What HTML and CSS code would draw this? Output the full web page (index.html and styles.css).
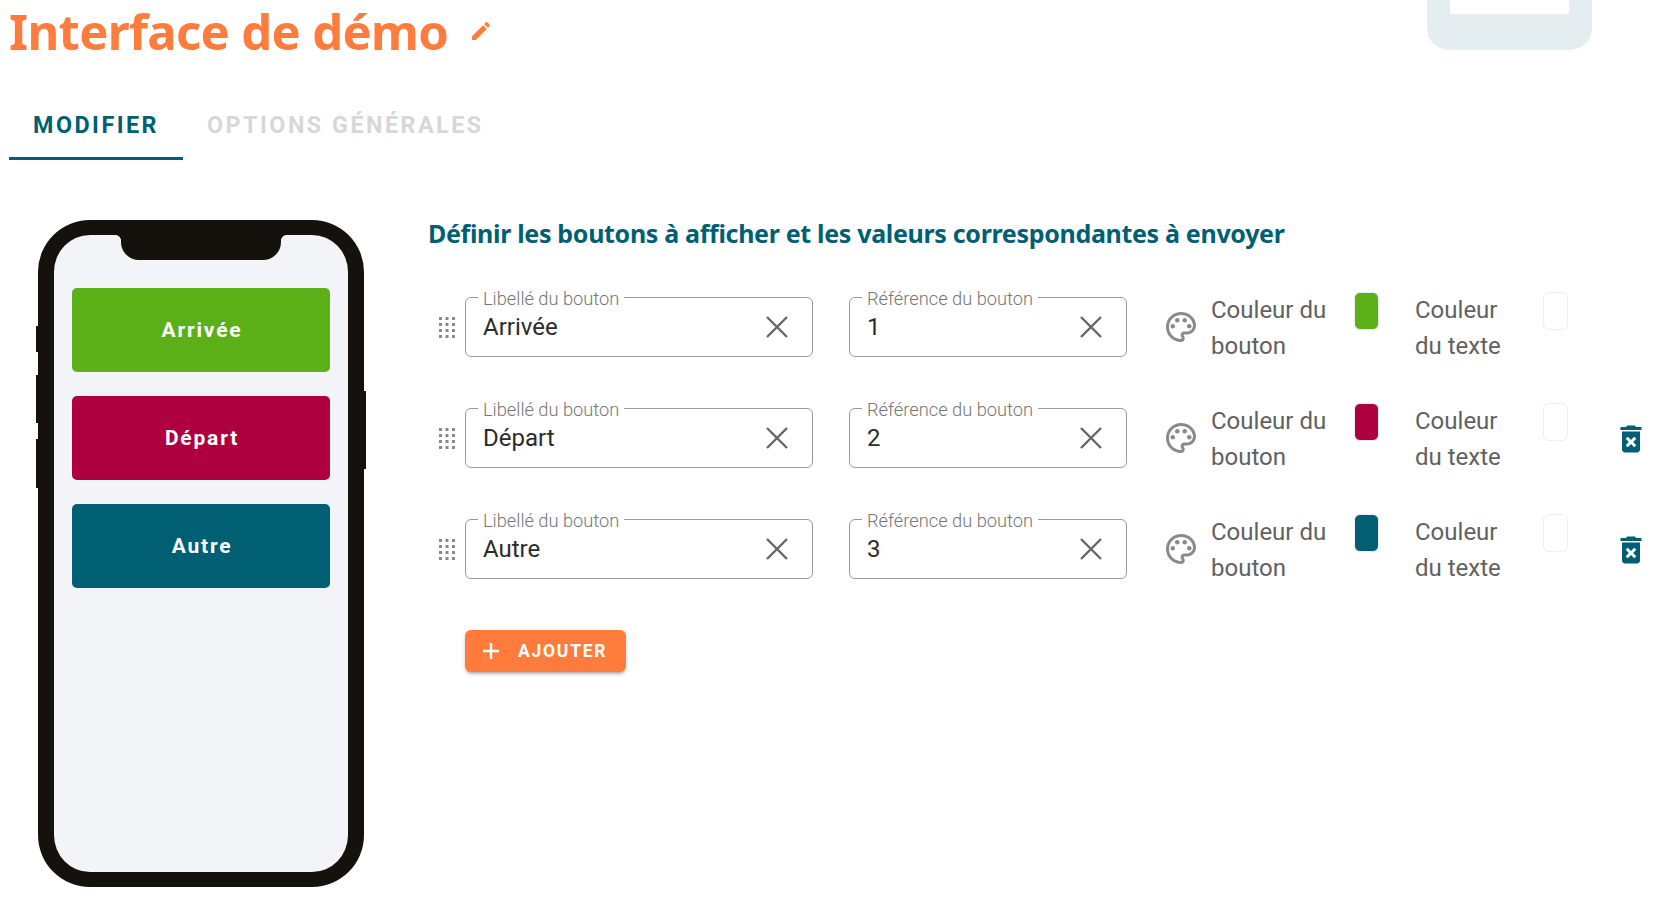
FILE: index.html
```html
<!DOCTYPE html>
<html lang="fr">
<head>
    <meta charset="UTF-8">
    <title>Interface de démo</title>
    <link rel="stylesheet" href="styles.css">
</head>
<body>
    <!-- Aperçu coupé en haut à droite -->
    <div class="corner-device"><div class="corner-screen"></div></div>

    <header class="page-title">
        <h1>Interface de démo</h1>
        <svg class="edit-icon" viewBox="0 0 24 24"><path d="M3 17.25V21h3.75L17.81 9.94l-3.75-3.75L3 17.25zM20.71 7.04a1 1 0 0 0 0-1.41l-2.34-2.34a1 1 0 0 0-1.41 0l-1.83 1.83 3.75 3.75 1.83-1.83z"/></svg>
    </header>

    <nav class="tabs">
        <div class="tab active">MODIFIER</div>
        <div class="tab">OPTIONS GÉNÉRALES</div>
    </nav>

    <main class="content">
        <!-- Téléphone -->
        <div class="phone">
            <span class="side-btn side-1"></span>
            <span class="side-btn side-2"></span>
            <span class="side-btn side-3"></span>
            <span class="side-btn side-4"></span>
            <div class="screen">
                <div class="notch"></div>
                <div class="phone-btn green">Arrivée</div>
                <div class="phone-btn red">Départ</div>
                <div class="phone-btn teal">Autre</div>
            </div>
        </div>

        <section class="editor">
            <h2>Définir les boutons à afficher et les valeurs correspondantes à envoyer</h2>

            <div class="row">
                <svg class="drag" viewBox="0 0 16 21"><use href="#dots"/></svg>
                <div class="field field-label">
                    <label>Libellé du bouton</label>
                    <span class="value">Arrivée</span>
                    <svg class="clear" viewBox="0 0 24 24"><path d="M2 2l20 20M22 2L2 22"/></svg>
                </div>
                <div class="field field-ref">
                    <label>Référence du bouton</label>
                    <span class="value">1</span>
                    <svg class="clear" viewBox="0 0 24 24"><path d="M2 2l20 20M22 2L2 22"/></svg>
                </div>
                <svg class="palette" viewBox="0 0 24 24"><use href="#palette"/></svg>
                <div class="color-text color-btn">Couleur du bouton</div>
                <span class="swatch green"></span>
                <div class="color-text color-txt">Couleur du texte</div>
                <span class="swatch white"></span>
            </div>

            <div class="row">
                <svg class="drag" viewBox="0 0 16 21"><use href="#dots"/></svg>
                <div class="field field-label">
                    <label>Libellé du bouton</label>
                    <span class="value">Départ</span>
                    <svg class="clear" viewBox="0 0 24 24"><path d="M2 2l20 20M22 2L2 22"/></svg>
                </div>
                <div class="field field-ref">
                    <label>Référence du bouton</label>
                    <span class="value">2</span>
                    <svg class="clear" viewBox="0 0 24 24"><path d="M2 2l20 20M22 2L2 22"/></svg>
                </div>
                <svg class="palette" viewBox="0 0 24 24"><use href="#palette"/></svg>
                <div class="color-text color-btn">Couleur du bouton</div>
                <span class="swatch red"></span>
                <div class="color-text color-txt">Couleur du texte</div>
                <span class="swatch white"></span>
                <svg class="trash" viewBox="0 0 24 24"><use href="#trash"/></svg>
            </div>

            <div class="row">
                <svg class="drag" viewBox="0 0 16 21"><use href="#dots"/></svg>
                <div class="field field-label">
                    <label>Libellé du bouton</label>
                    <span class="value">Autre</span>
                    <svg class="clear" viewBox="0 0 24 24"><path d="M2 2l20 20M22 2L2 22"/></svg>
                </div>
                <div class="field field-ref">
                    <label>Référence du bouton</label>
                    <span class="value">3</span>
                    <svg class="clear" viewBox="0 0 24 24"><path d="M2 2l20 20M22 2L2 22"/></svg>
                </div>
                <svg class="palette" viewBox="0 0 24 24"><use href="#palette"/></svg>
                <div class="color-text color-btn">Couleur du bouton</div>
                <span class="swatch teal"></span>
                <div class="color-text color-txt">Couleur du texte</div>
                <span class="swatch white"></span>
                <svg class="trash" viewBox="0 0 24 24"><use href="#trash"/></svg>
            </div>

            <button class="add-btn">
                <svg viewBox="0 0 16 16"><path d="M8 0v16M0 8h16"/></svg>
                AJOUTER
            </button>
        </section>
    </main>

    <!-- Icones partagees -->
    <svg class="defs" width="0" height="0">
        <defs>
            <g id="dots">
                <rect x="0" y="0" width="3" height="3"/><rect x="6.5" y="0" width="3" height="3"/><rect x="13" y="0" width="3" height="3"/>
                <rect x="0" y="6" width="3" height="3"/><rect x="6.5" y="6" width="3" height="3"/><rect x="13" y="6" width="3" height="3"/>
                <rect x="0" y="12" width="3" height="3"/><rect x="6.5" y="12" width="3" height="3"/><rect x="13" y="12" width="3" height="3"/>
                <rect x="0" y="18" width="3" height="3"/><rect x="6.5" y="18" width="3" height="3"/><rect x="13" y="18" width="3" height="3"/>
            </g>
            <g id="palette">
                <path d="M12 2C6.49 2 2 6.49 2 12s4.49 10 10 10c1.38 0 2.5-1.12 2.5-2.5 0-.61-.23-1.2-.64-1.67a.528.528 0 0 1 .39-.83H16c3.31 0 6-2.69 6-6 0-4.96-4.49-9-10-9zm4 13h-1.77c-1.38 0-2.5 1.12-2.5 2.5 0 .61.22 1.19.63 1.65.06.07.14.19.14.35 0 .28-.22.5-.5.5-4.41 0-8-3.59-8-8s3.59-8 8-8 8 3.14 8 7c0 2.21-1.79 4-4 4z"/>
                <circle cx="6.5" cy="11.5" r="1.5"/><circle cx="9.5" cy="7.5" r="1.5"/><circle cx="14.5" cy="7.5" r="1.5"/><circle cx="17.5" cy="11.5" r="1.5"/>
            </g>
            <g id="trash">
                <path d="M6 19c0 1.1.9 2 2 2h8c1.1 0 2-.9 2-2V7H6v12zm2.46-7.12 1.41-1.41L12 12.59l2.12-2.12 1.41 1.41L13.41 14l2.12 2.12-1.41 1.41L12 15.41l-2.12 2.12-1.41-1.41L10.59 14l-2.13-2.12zM15.5 4l-1-1h-5l-1 1H5v2h14V4z"/>
            </g>
        </defs>
    </svg>
</body>
</html>
```

FILE: styles.css
```css
* {
    box-sizing: border-box;
    margin: 0;
    padding: 0;
}

html, body {
    height: 100%;
    overflow: hidden;
}

body {
    background: #fff;
    font-family: 'Roboto', sans-serif;
    color: #212121;
    position: relative;
}

.defs {
    position: absolute;
}

/* Coin du haut a droite */
.corner-device {
    position: absolute;
    top: -60px;
    left: 1427px;
    width: 165px;
    height: 110px;
    background: #e4edef;
    border-radius: 22px;
}

.corner-screen {
    position: absolute;
    left: 23px;
    right: 23px;
    bottom: 36px;
    height: 60px;
    background: #fff;
    border-radius: 2px;
}

/* Titre */
.page-title {
    display: flex;
    align-items: center;
    height: 62px;
    padding-left: 9px;
}

.page-title h1 {
    font-family: 'Noto Sans', sans-serif;
    font-size: 49px;
    font-weight: 700;
    letter-spacing: -0.67px;
    color: #ff7c3d;
    line-height: 60px;
}

.edit-icon {
    width: 24px;
    height: 24px;
    margin-left: 21px;
    fill: #ff7c3d;
}

/* Onglets */
.tabs {
    display: flex;
    margin: 38px 0 0 9px;
    height: 60px;
    border: 0;
}

.tab {
    padding: 0 24px;
    font-size: 23.3px;
    font-weight: 700;
    letter-spacing: 2.5px;
    line-height: 50px;
    color: #d7d7d7;
}

.tab.active {
    color: #005f73;
    border-bottom: 3px solid #005f73;
}

/* Contenu */
.content {
    display: flex;
    margin-top: 60px;
    padding-left: 36px;
}

.phone {
    position: relative;
    flex: none;
    width: 330px;
    height: 667px;
    margin-top: 0;
}

.side-btn {
    position: absolute;
    width: 10px;
    background: #15120d;
}

.side-1 { left: 0; top: 106px; height: 26px; }
.side-2 { left: 0; top: 155px; height: 48px; }
.side-3 { left: 0; top: 219px; height: 49px; }
.side-4 { right: 0; top: 171px; height: 78px; }

.screen {
    position: absolute;
    left: 2px;
    top: 0;
    width: 326px;
    height: 667px;
    padding: 53px 18px 0;
    border: solid #15120d;
    border-width: 15px 16px;
    border-radius: 52px;
    background: #f2f4f7;
    display: flex;
    flex-direction: column;
    gap: 24px;
}

.notch {
    position: absolute;
    top: 0;
    left: 67px;
    width: 160px;
    height: 25px;
    background: #15120d;
    border-radius: 0 0 18px 18px;
}

.notch::before,
.notch::after {
    content: "";
    position: absolute;
    top: 0;
    width: 5px;
    height: 5px;
}

.notch::before {
    left: -5px;
    background: radial-gradient(circle at 0 100%, transparent 4.5px, #15120d 5px);
}

.notch::after {
    right: -5px;
    background: radial-gradient(circle at 100% 100%, transparent 4.5px, #15120d 5px);
}

.phone-btn {
    height: 84px;
    padding-left: 2px;
    border-radius: 5px;
    color: #fff;
    font-size: 21px;
    font-weight: 700;
    letter-spacing: 1.8px;
    text-align: center;
    line-height: 85px;
}

.green { background: #5bb018; }
.red { background: #ae003f; }
.teal { background: #005f73; }

/* Formulaire */
.editor {
    margin-left: 62px;
    flex: 1;
}

.editor h2 {
    font-family: 'Noto Sans', sans-serif;
    font-size: 25px;
    font-weight: 700;
    letter-spacing: -0.32px;
    color: #005f73;
    line-height: 30px;
    margin-top: -2px;
    margin-bottom: 49px;
}

.row {
    display: flex;
    align-items: center;
    height: 60px;
    margin-bottom: 51px;
    position: relative;
}

.drag {
    width: 16px;
    height: 21px;
    margin-left: 11px;
    fill: #8a8a8a;
    flex: none;
}

.field {
    position: relative;
    height: 60px;
    border: 1px solid #9a9a9a;
    border-radius: 6px;
    display: flex;
    align-items: center;
    padding: 0 17px;
    flex: none;
}

.field-label {
    width: 348px;
    margin-left: 10px;
}

.field-ref {
    width: 278px;
    margin-left: 36px;
}

.field label {
    position: absolute;
    top: -9px;
    left: 12px;
    padding: 0 5px;
    background: #fff;
    font-size: 18.25px;
    line-height: 20px;
    color: #757575;
    font-weight: 300;
}

.value {
    font-size: 24px;
    font-weight: 400;
    color: #2b2b2b;
    flex: 1;
}

.clear {
    width: 24px;
    height: 24px;
    margin-right: 6px;
    fill: none;
    stroke: #666;
    stroke-width: 2.4;
}

.palette {
    width: 36px;
    height: 36px;
    margin-left: 36px;
    fill: #8a8a8a;
    flex: none;
}

.color-text {
    font-size: 24px;
    line-height: 36px;
    color: #616161;
    flex: none;
    margin-top: 2px;
}

.color-btn {
    width: 130px;
    margin-left: 12px;
}

.color-txt {
    width: 100px;
    margin-left: 36px;
}

.swatch {
    flex: none;
    align-self: flex-start;
    width: 25px;
    height: 38px;
    margin-top: -5px;
    border-radius: 6px;
    border: 1px solid #eee;
}

.swatch.white {
    background: #fff;
    margin-left: 28px;
}

.color-btn + .swatch {
    margin-left: 13px;
}

.trash {
    position: absolute;
    left: 1185px;
    top: 13px;
    width: 36px;
    height: 36px;
    fill: #005f73;
}

.add-btn {
    display: flex;
    align-items: center;
    margin: 0 0 0 37px;
    width: 161px;
    height: 42px;
    padding-left: 18px;
    border: 0;
    border-radius: 6px;
    background: #ff7c3d;
    color: #fff;
    font-family: 'Roboto', sans-serif;
    font-size: 17.5px;
    font-weight: 700;
    letter-spacing: 1.75px;
    box-shadow: 0 3px 3px -2px rgba(0,0,0,.25), 0 2px 4px rgba(0,0,0,.18);
}

.add-btn svg {
    width: 16px;
    height: 16px;
    margin-right: 19px;
    fill: none;
    stroke: #fff;
    stroke-width: 2.4;
}
```
